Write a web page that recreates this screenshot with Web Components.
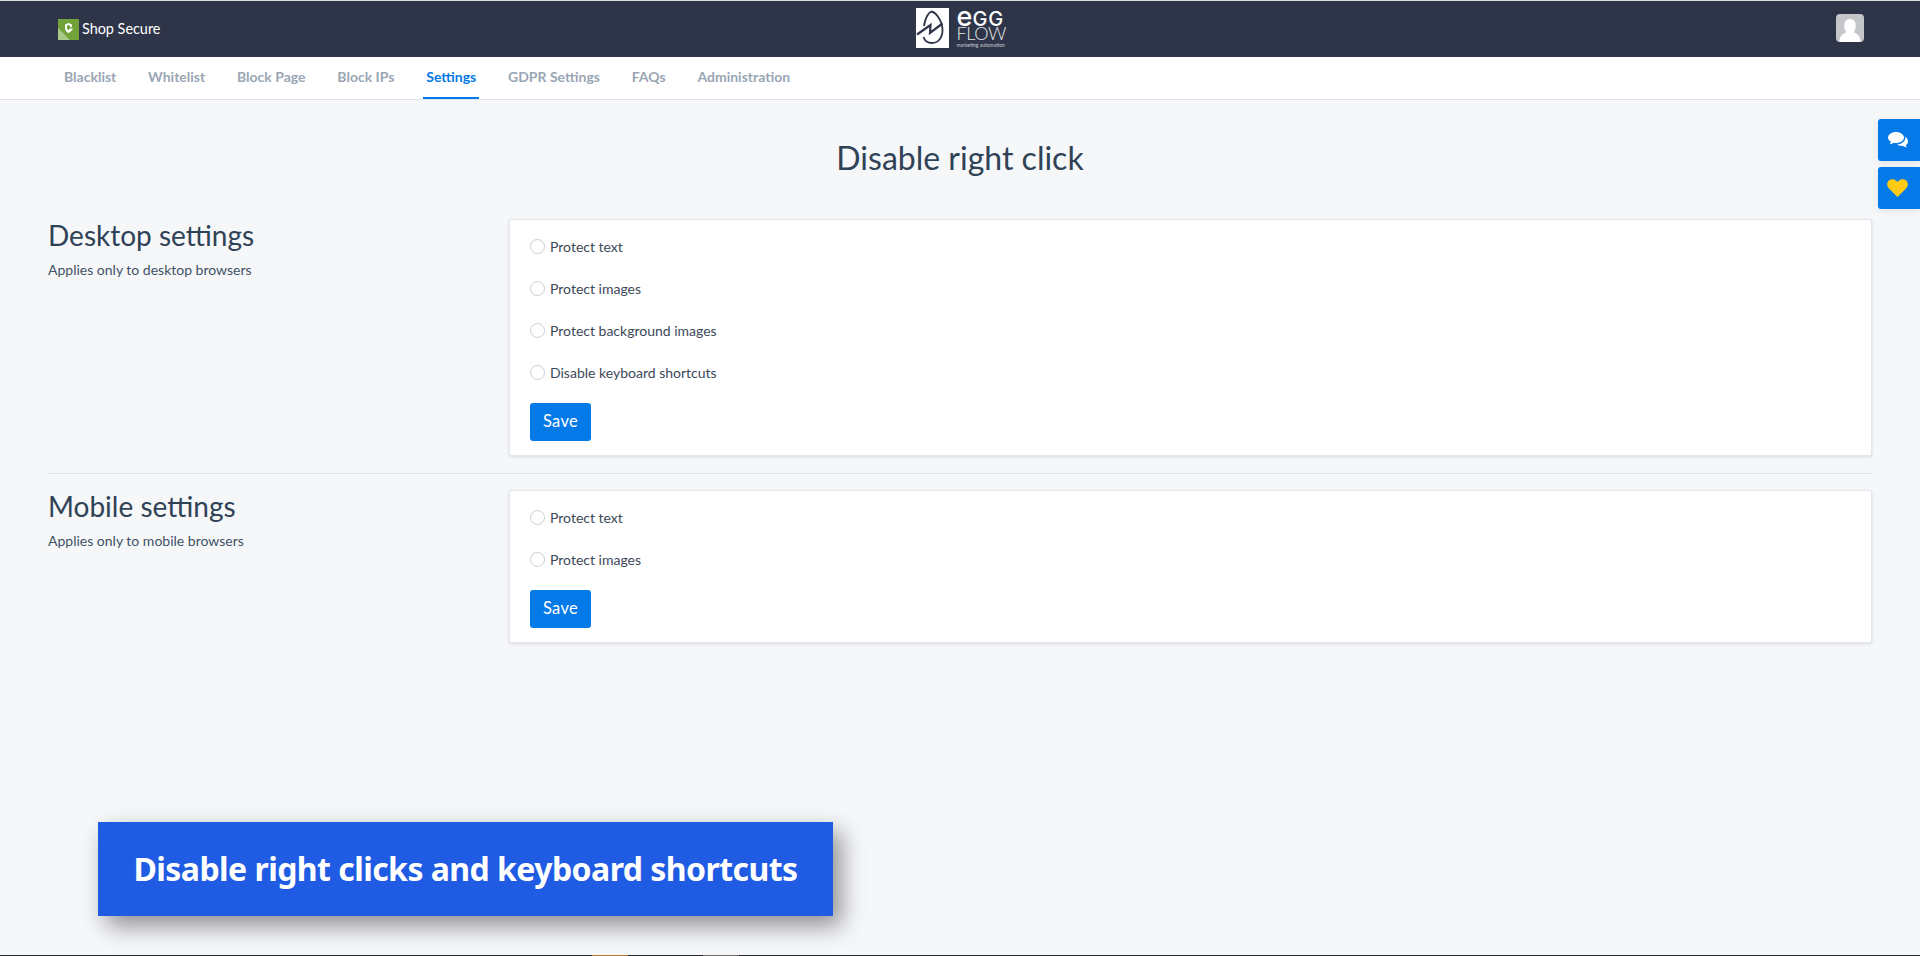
<!DOCTYPE html>
<html lang="en">
<head>
<meta charset="utf-8">
<title>Disable right click</title>
<style>
  html, body { margin: 0; height: 100%; }
  body {
    background: #f6f7f9;
    color: #2f4256;
    font-family: Lato, "Open Sans", sans-serif;
  }
  #app { position: relative; height: 956px; overflow: hidden; box-sizing: border-box; border-top: 1px solid #ddd; }
</style>
</head>
<body>
<div id="app">
  <app-header></app-header>
  <app-nav active="Settings" items="Blacklist|Whitelist|Block Page|Block IPs|Settings|GDPR Settings|FAQs|Administration"></app-nav>
  <page-title>Disable right click</page-title>
  <settings-section heading="Desktop settings" note="Applies only to desktop browsers">
    <radio-option>Protect text</radio-option>
    <radio-option>Protect images</radio-option>
    <radio-option>Protect background images</radio-option>
    <radio-option>Disable keyboard shortcuts</radio-option>
    <save-button>Save</save-button>
  </settings-section>
  <section-rule></section-rule>
  <settings-section heading="Mobile settings" note="Applies only to mobile browsers">
    <radio-option>Protect text</radio-option>
    <radio-option>Protect images</radio-option>
    <save-button>Save</save-button>
  </settings-section>
  <side-tabs></side-tabs>
  <promo-banner>Disable right clicks and keyboard shortcuts</promo-banner>
  <bottom-strip></bottom-strip>
</div>
<script>
function shadow(el, html) {
  el.attachShadow({ mode: 'open' });
  el.shadowRoot.innerHTML = html;
}

class AppHeader extends HTMLElement {
  connectedCallback() {
    shadow(this, `
      <style>
        :host { display: grid; grid-template-columns: 1fr auto 1fr; align-items: center; height: 56px; background: #2f3548; color: #fff; }
        .brand { display: flex; align-items: center; gap: 3px; padding-left: 58px; font-size: 14.4px; line-height: 20px; }
        .brand svg { display: block; }
        .logo { display: flex; align-items: center; gap: 8px; margin-bottom: 2px; }
        .logo .mark { display: block; }
        .words { display: flex; flex-direction: column; width: 48px; }
        .egg { height: 17px; line-height: 17px; font-family: Inter, sans-serif; font-size: 20px; font-weight: 500; letter-spacing: 1px; white-space: nowrap; }
        .egg b { font-size: 27px; font-weight: 500; letter-spacing: 0; }
        .flow { height: 17px; line-height: 17px; font-size: 18px; font-weight: 300; letter-spacing: -.4px; color: #e4e5e9; }
        .tiny { height: 6px; line-height: 6px; font-size: 5px; color: #c9ccd3; white-space: nowrap; }
        .user { justify-self: end; margin: 0 56px 2px 0; display: block; }
      </style>
      <div class="brand">
        <svg width="21" height="21" viewBox="0 0 21 21">
          <rect width="21" height="21" fill="#72a33a"/>
          <path d="M0 9 L12 21 H0Z" fill="#a9c98a"/>
          <path d="M7 5.5 L10.5 4 L14 5.5 V9 C14 11.5 12.5 13 10.5 14 C8.5 13 7 11.5 7 9Z" fill="#fff"/>
          <path d="M9 6.7 L10.5 6 L12 6.7 V9 C12 10 11.4 10.7 10.5 11.2 C9.6 10.7 9 10 9 9Z" fill="#72a33a"/>
          <path d="M10.5 8 H14.5 V10 H10.5Z" fill="#72a33a"/>
          <path d="M11.5 9.5 h3 v1 l-1.5 1.5 l-1.5 -1.5Z" fill="#fff"/>
        </svg>
        <span>Shop Secure</span>
      </div>
      <div class="logo">
        <svg class="mark" width="33" height="40" viewBox="0 0 33 40">
          <rect width="33" height="40" fill="#fff"/>
          <path d="M8 18 C9 11 12 4.500 15.500 3.500 C20 4.500 26.500 13 26.500 22 C26.500 30 22 35 16 35 C11.500 35 8.500 32.500 7.500 29" fill="none" stroke="#2f3548" stroke-width="1.800"/>
          <path d="M1 26.500 L14.500 17 L14 25 L26.500 15.500" fill="none" stroke="#2f3548" stroke-width="2.200"/>
        </svg>
        <div class="words">
          <div class="egg"><b>e</b>GG</div>
          <div class="flow">FLOW</div>
          <div class="tiny">marketing automation</div>
        </div>
      </div>
      <svg class="user" width="28" height="28" viewBox="0 0 28 28">
        <rect width="28" height="28" rx="4" fill="#c4c6c9"/>
        <path d="M3.500 28 C3.500 22 7 19.500 10.500 18.300 C9 16.800 8.300 14.500 8.300 11 C8.300 7.500 10.500 5 14 5 C17.500 5 19.700 7.500 19.700 11 C19.700 14.500 19 16.800 17.500 18.300 C21 19.500 24.500 22 24.500 28Z" fill="#fff"/>
      </svg>
    `);
  }
}

class AppNav extends HTMLElement {
  connectedCallback() {
    const active = this.getAttribute('active');
    const links = this.getAttribute('items').split('|').map(name =>
      `<a href="#" class="${name === active ? 'on' : ''}">${name}</a>`).join('');
    shadow(this, `
      <style>
        :host { display: flex; gap: 25.8px; height: 43px; box-sizing: border-box; padding-left: 61px; background: #fff; border-bottom: 1px solid #dfe4ea; }
        a { display: block; box-sizing: border-box; height: 42px; padding: 0 3px; line-height: 40px; font-size: 14px; font-weight: 700; color: #9aa6b4; text-decoration: none; white-space: nowrap; }
        a.on { color: #047ae8; border-bottom: 2px solid #047ae8; }
      </style>
      ${links}
    `);
  }
}

class PageTitle extends HTMLElement {
  connectedCallback() {
    shadow(this, `
      <style>
        :host { display: block; padding-top: 39px; height: 80px; text-align: center; font-size: 32px; line-height: 38px; color: #2f4256; }
      </style>
      <slot></slot>
    `);
  }
}

class SettingsSection extends HTMLElement {
  connectedCallback() {
    shadow(this, `
      <style>
        :host { display: grid; grid-template-columns: 461px 1fr; margin: 0 48px; }
        h2 { margin: -1px 0 0; font-size: 28px; line-height: 34px; font-weight: 400; color: #2f4256; }
        p { margin: 9px 0 0; font-size: 14px; line-height: 18px; color: #3f5267; }
        .card { background: #fff; border: 1px solid #e3e7ec; border-radius: 2px; box-shadow: 0 1px 3px rgba(60,80,110,.16); padding: 5.5px 21px 14.5px 20px; }
      </style>
      <div>
        <h2>${this.getAttribute('heading')}</h2>
        <p>${this.getAttribute('note')}</p>
      </div>
      <div class="card"><slot></slot></div>
    `);
  }
}

class RadioOption extends HTMLElement {
  connectedCallback() {
    shadow(this, `
      <style>
        :host { display: flex; align-items: center; gap: 5px; height: 42px; font-size: 14px; color: #3c4858; }
        i { width: 13px; height: 13px; border: 1px solid #c9d0d9; border-radius: 50%; background: #fff; }
      </style>
      <i></i><slot></slot>
    `);
  }
}

class SaveButton extends HTMLElement {
  connectedCallback() {
    shadow(this, `
      <style>
        :host { display: block; width: 61px; height: 38px; margin-top: 9px; box-sizing: border-box; border-radius: 3px; background: #047ae8; color: #fff; font-size: 16.5px; letter-spacing: .3px; line-height: 37px; text-align: center; }
      </style>
      <slot></slot>
    `);
  }
}

class SectionRule extends HTMLElement {
  connectedCallback() {
    shadow(this, `
      <style>
        :host { display: block; height: 1px; margin: 17px 48px 16px; background: #dfe2e6; }
      </style>
    `);
  }
}

class SideTabs extends HTMLElement {
  connectedCallback() {
    shadow(this, `
      <style>
        :host { position: absolute; right: 0; top: 118px; display: flex; flex-direction: column; gap: 6px; }
        div { display: flex; align-items: center; justify-content: center; box-sizing: border-box; padding-right: 3px; width: 42px; height: 42px; border-radius: 3px 0 0 3px; background: #047ae8; box-shadow: 0 2px 6px rgba(30,60,110,.1); }
      </style>
      <div>
        <svg width="22" height="18" viewBox="0 0 22 18">
          <path d="M9 1 C4.500 1 1 3.500 1 6.500 C1 8.300 2.200 9.800 4 10.800 C3.800 11.800 3.200 12.600 2.500 13.300 C4.200 13.200 5.700 12.700 6.800 11.800 C7.500 11.900 8.200 12 9 12 C13.500 12 17 9.500 17 6.500 C17 3.500 13.500 1 9 1Z" fill="#fff"/>
          <path d="M18 5.500 C18.200 6 18.300 6.400 18.300 6.900 C18.300 10.300 14.700 13 10.200 13.300 C11.300 14.300 13 15 15 15 C15.500 15 16 15 16.400 14.900 C17.300 15.700 18.500 16.200 20 16.300 C19.400 15.700 19 15 18.800 14.200 C20.200 13.400 21 12.200 21 10.800 C21 8.700 19.800 6.700 18 5.500Z" fill="#fff"/>
        </svg>
      </div>
      <div>
        <svg width="21" height="18" viewBox="0 0 21 18">
          <path d="M10.500 18 L2 9.500 C-0.500 7 -0.300 3.300 1.800 1.500 C4 -0.500 7.500 -0.200 9.500 1.900 L10.500 3 L11.500 1.900 C13.500 -0.200 17 -0.500 19.200 1.500 C21.300 3.300 21.500 7 19 9.500Z" fill="#ffcb14"/>
        </svg>
      </div>
    `);
  }
}

class PromoBanner extends HTMLElement {
  connectedCallback() {
    shadow(this, `
      <style>
        :host { position: absolute; left: 98px; top: 821px; box-sizing: border-box; width: 735px; height: 94px; padding-bottom: 2px; display: flex; align-items: center; justify-content: center; background: #205be3; box-shadow: 8px 10px 22px rgba(0,0,0,.42); color: #fff; font-family: "Noto Sans", sans-serif; font-weight: 700; font-size: 32px; letter-spacing: -.55px; white-space: nowrap; }
      </style>
      <slot></slot>
    `);
  }
}

class BottomStrip extends HTMLElement {
  connectedCallback() {
    shadow(this, `
      <style>
        :host { position: absolute; left: 0; right: 0; bottom: 0; height: 1px; background: #24262b; }
        i { position: absolute; top: 0; height: 1px; width: 36px; }
      </style>
      <i style="left:592px;background:#b5793a"></i>
      <i style="left:703px;background:#6b6b6b"></i>
    `);
  }
}

customElements.define('app-header', AppHeader);
customElements.define('app-nav', AppNav);
customElements.define('page-title', PageTitle);
customElements.define('settings-section', SettingsSection);
customElements.define('radio-option', RadioOption);
customElements.define('save-button', SaveButton);
customElements.define('section-rule', SectionRule);
customElements.define('side-tabs', SideTabs);
customElements.define('promo-banner', PromoBanner);
customElements.define('bottom-strip', BottomStrip);
</script>
</body>
</html>
